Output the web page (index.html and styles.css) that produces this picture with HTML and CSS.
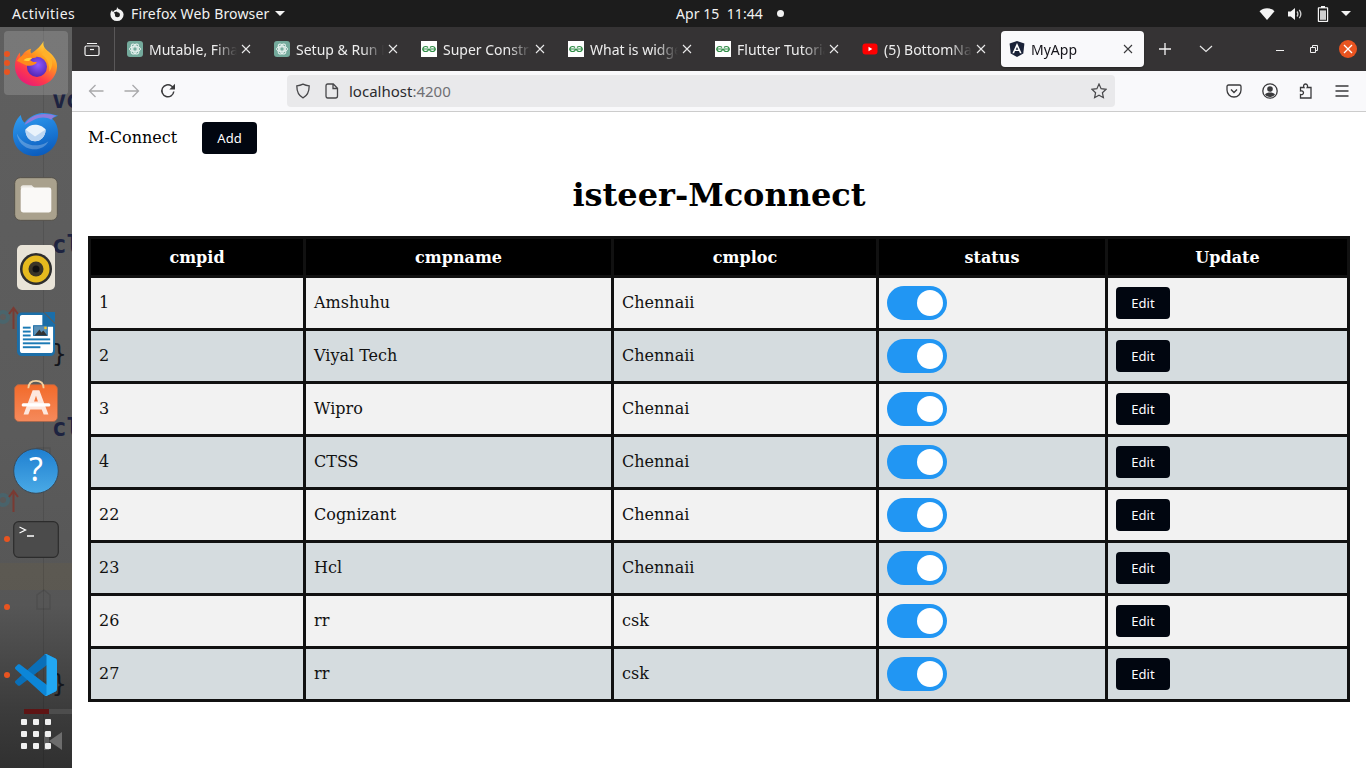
FILE: index.html
```html
<!DOCTYPE html>
<html lang="en">
<head>
<meta charset="utf-8">
<title>MyApp</title>
<link rel="stylesheet" href="styles.css">
</head>
<body>
<svg class="defs" width="0" height="0" aria-hidden="true">
  <defs>
    <symbol id="x" viewBox="0 0 10 10"><path fill="none" stroke="currentColor" stroke-width="1.100" d="M1 1l8 8M9 1l-8 8"/></symbol>
    <symbol id="gpt" viewBox="0 0 16 16"><rect width="16" height="16" rx="3" fill="#74aa9c"/><g fill="none" stroke="#e9f3f0" stroke-width=".9"><circle cx="8" cy="8" r="2.200"/><ellipse cx="8" cy="8" rx="5.500" ry="2.800"/><ellipse cx="8" cy="8" rx="5.500" ry="2.800" transform="rotate(60 8 8)"/><ellipse cx="8" cy="8" rx="5.500" ry="2.800" transform="rotate(120 8 8)"/></g></symbol>
    <symbol id="gfg" viewBox="0 0 16 16"><rect width="16" height="16" fill="#fff"/><g fill="none" stroke="#2f8d46" stroke-width="1.200"><path d="M7.800 8H1.700c.3-1.700 1.400-2.500 2.900-2.500 1 0 1.800.3 2.400 1M8.200 8h6.100c-.3-1.700-1.400-2.500-2.900-2.500-1 0-1.800.3-2.400 1M1.800 8.300c.3 1.400 1.400 2.200 2.800 2.200 1.400 0 2.600-.7 3-2.400M14.200 8.300c-.3 1.400-1.400 2.200-2.800 2.200-1.400 0-2.600-.7-3-2.400"/></g></symbol>
  </defs>
</svg>
<header class="topbar">
  <span class="activities">Activities</span>
  <div class="appmenu">
    <svg class="ff-mono" width="16" height="16" viewBox="0 0 16 16"><path fill="#f2f2f2" d="M8 0.8c.3 1.200 1 2 2.200 2.400 2.400.9 4.400 2.600 4.400 5.300A6.600 6.600 0 0 1 8 15.100 6.600 6.600 0 0 1 1.400 8.500c0-1.700.6-3.200 1.700-4.400 0 1 .4 1.700 1 2.200C4.600 4.700 6 4 7.400 3.800 7.900 2.800 8.100 1.800 8 .8z"/><circle cx="8.400" cy="8.700" r="2.500" fill="#1c1c1c"/><path fill="#1c1c1c" d="M5 6.200l3-.6.6 1.600-2.800.8z"/></svg>
    <span class="appname">Firefox Web Browser</span>
    <i class="caret"></i>
  </div>
  <div class="clock"><span>Apr 15&nbsp;&nbsp;11:44</span><i class="clock-dot"></i></div>
  <div class="status">
    <svg class="st-wifi" width="16" height="14" viewBox="0 0 16 14"><path fill="#f4f4f4" d="M8 13 .5 4.200C2.500 2.300 5.100 1.200 8 1.200s5.500 1.100 7.500 3z"/></svg>
    <svg class="st-vol" width="16" height="14" viewBox="0 0 16 14"><path fill="#f4f4f4" d="M1 4.500h2.800L8 1v12L3.800 9.500H1z"/><path fill="none" stroke="#d0d0d0" stroke-width="1.300" d="M10 4.500c1 1.400 1 3.600 0 5M12.300 2.800c1.800 2.500 1.800 6 0 8.400"/></svg>
    <svg class="st-bat" width="12" height="16" viewBox="0 0 12 16"><path fill="#f4f4f4" d="M4 0h4v1.200h2.200c.6 0 1 .4 1 1V15c0 .6-.4 1-1 1H1.800c-.6 0-1-.4-1-1V2.200c0-.6.4-1 1-1H4z"/><rect x="2" y="2.400" width="8" height="12.400" fill="#1c1c1c"/><rect x="3" y="4.400" width="6" height="9.400" fill="#cfcfcf"/></svg>
    <i class="caret"></i>
  </div>
</header>

<div class="desktop">
  <aside class="dock">
    <svg class="dock-bg" width="72" height="741" viewBox="0 0 72 741">
      <rect x="0" y="536" width="72" height="27" fill="#6b5f45" opacity=".25"/>
      <path fill="none" stroke="#000" stroke-opacity=".1" stroke-width="1" d="M43.500 0V741"/>
      <g fill="none" stroke="#000" stroke-opacity=".09" stroke-width="1.500">
        <path d="M37 38v14h13V38l-6-5zM37 178v14h13v-14l-6-5zM37 305v14h13v-14zM37 421v10l6 5 7-5v-10zM37 496v14h13v-14zM37 568v14h13v-14l-6-5zM37 641v14h13v-14l-6-5z"/>
      </g>
      <g fill="#1d2340" font-family="'DejaVu Sans Mono',monospace" font-weight="700" font-size="24">
        <text x="52" y="81">vo</text><text x="52" y="226">cl</text><text x="52" y="409">cl</text>
      </g>
      <g fill="#14161c" font-family="'DejaVu Sans Mono',monospace" font-size="24">
        <text x="52" y="335">}</text><text x="52" y="665">}</text>
      </g>
      <g fill="none" stroke="#3f6b78" stroke-width="4" opacity=".6"><circle cx="3" cy="290" r="5"/><circle cx="3" cy="473" r="5"/></g>
      <g fill="none" stroke="#7a3a32" stroke-width="2"><path d="M13.500 302v-21M9 287l4.500-6 4.500 6M13.500 485v-21M9 470l4.500-6 4.500 6"/></g>
      <rect x="24" y="682" width="25" height="5" fill="#5e1414"/><rect x="49" y="682" width="23" height="5" fill="#4d4d4d"/>
      <path fill="#6d6d6d" d="M62 705v18l-13-9z"/><rect x="44" y="705" width="5" height="18" fill="#5d5d5d"/>
    </svg>
    <i class="run-dot d1"></i><i class="run-dot d2"></i><i class="run-dot d3"></i>
    <i class="run-dot d4"></i><i class="run-dot d5"></i><i class="run-dot d6"></i>

    <div class="dock-item di-ff">
      <svg width="44" height="46" viewBox="0 0 46 48" preserveAspectRatio="none">
        <defs>
          <linearGradient id="fx1" x1=".8" y1="0" x2=".2" y2="1"><stop offset="0" stop-color="#ffe14a"/><stop offset=".35" stop-color="#ff9a1f"/><stop offset=".7" stop-color="#ff3a4b"/><stop offset="1" stop-color="#e3167f"/></linearGradient>
          <radialGradient id="fx2" cx=".55" cy=".4" r=".7"><stop offset="0" stop-color="#9059ff"/><stop offset="1" stop-color="#4a1fa8"/></radialGradient>
        </defs>
        <path fill="url(#fx1)" d="M31 1c-1 5 1 8 5 11 5 4 9 9 9 15 0 12-10 21-22 21S1 39 1 27c0-6 2-10 5-14l1 6c2-5 6-9 11-10-1 2-1 3 0 5 3-2 9-6 13-13z"/>
        <circle cx="24" cy="28" r="10.500" fill="url(#fx2)"/>
        <path fill="#ff8a1c" d="M3 22c3-5 8-8 13-7 3 .5 6 2 8 4-3-1-6 0-7 2 2 2 4 2 7 2-2 4-8 5-12 3-3-1-6-3-9-4z"/>
        <path fill="#ffd23a" d="M10 21c3-2 6-3 9-2-2 1-3 2-3 3-2 0-4 0-6-1z"/>
        <path fill="#ffb12a" d="M31 8c5 4 9 9 9 16 0 3-1 6-3 9 0-8-2-14-8-18 2-2 2-4 2-7z"/>
      </svg>
    </div>
    <div class="dock-item di-tb">
      <svg width="48" height="47" viewBox="0 0 50 48" preserveAspectRatio="none">
        <defs><linearGradient id="tb1" x1=".3" y1="0" x2=".6" y2="1"><stop offset="0" stop-color="#2f9bf0"/><stop offset="1" stop-color="#0a5bbd"/></linearGradient></defs>
        <path fill="url(#tb1)" d="M9 6c1 4 2 6 4 8 4-5 10-9 18-10 6 0 12 1 17 3-3 1-5 2-6 3 4 4 6 9 6 15 0 12-10 23-24 23S1 38 1 26c0-8 3-15 8-20z"/>
        <path fill="#8f7bdc" d="M13 16c4-7 12-11 21-11 5 0 9 1 12 2-2 1-4 2-5 4-5-3-12-3-18 0-4 2-7 4-10 5z"/>
        <path fill="#fff" fill-opacity=".25" d="M5 25c4 8 12 13 22 12 4 0 8-2 11-4-3 6-10 9-17 8C12 40 6 33 5 25z"/>
        <path fill="#eaf3fb" d="M14 21c2-3 6-5 10-5s9 2 11 5c0 7-5 12-11 12s-10-5-10-12z"/>
        <path fill="#bcd6f2" d="M14 21l10 7 11-7c0 7-5 12-11 12s-10-5-10-12z"/>
      </svg>
    </div>
    <div class="dock-item di-files">
      <svg width="44" height="44" viewBox="0 0 46 46">
        <rect x=".7" y=".7" width="44.600" height="44.600" rx="6" fill="#a9a18d" stroke="#55524a" stroke-width="1"/>
        <path fill="#ece9e3" d="M7 11c0-1.500 1-2.500 2.500-2.500h9L22 12H7z"/>
        <rect x="7" y="11" width="32" height="26" rx="2.500" fill="#faf9f7"/>
      </svg>
    </div>
    <div class="dock-item di-rb">
      <svg width="46" height="46" viewBox="0 0 46 46">
        <rect x="4" y="1" width="38" height="45" rx="5" fill="#e9e4d8"/>
        <circle cx="23" cy="25" r="16" fill="#2e2e2e"/><circle cx="23" cy="25" r="13.500" fill="#e6ba1e"/><circle cx="23" cy="25" r="7.500" fill="#3a3528"/><circle cx="23" cy="25" r="3.500" fill="#111"/>
      </svg>
    </div>
    <div class="dock-item di-lo">
      <svg width="39" height="45" viewBox="0 0 40 46" preserveAspectRatio="none">
        <path fill="#1b6ea8" d="M5 .5h22l12 12V40c0 3-2 5-5 5H5c-3 0-5-2-5-5V5.500C0 2.500 2 .5 5 .5z"/>
        <path fill="#fff" d="M5 3h21v12h11v24c0 2-1 3-3 3H6c-2 0-3-1-3-3V5c0-1 1-2 2-2z"/>
        <path fill="#1b6ea8" d="M28 0h11v11z"/>
        <g fill="#1b7ab5"><rect x="6" y="15" width="8" height="2"/><rect x="6" y="19" width="8" height="2"/><rect x="6" y="23" width="8" height="2"/><rect x="6" y="27" width="28" height="2"/><rect x="6" y="31" width="28" height="2"/><rect x="6" y="35" width="18" height="2"/></g>
        <rect x="17" y="14" width="14" height="10" fill="#5a8fb5" stroke="#1b6ea8"/>
        <path fill="#333" d="M18 24l5-6 2 3 2-2 4 5z"/><rect x="28" y="15" width="2.500" height="2.500" fill="#f5c431"/>
      </svg>
    </div>
    <div class="dock-item di-store">
      <svg width="44" height="43" viewBox="0 0 46 46" preserveAspectRatio="none">
        <defs><linearGradient id="sc" x1="0" y1="0" x2="0" y2="1"><stop offset="0" stop-color="#f26a2a"/><stop offset="1" stop-color="#f58a5c"/></linearGradient></defs>
        <rect x=".5" y="6" width="45" height="39.500" rx="5" fill="url(#sc)" stroke="#a9674a"/>
        <path fill="none" stroke="#f1d0a0" stroke-width="1.800" d="M15 10c0-6 4-8 8-8s8 2 8 8"/>
        <path fill="#fde7de" d="M19.500 12h7L36 38h-5l-2-5.500H17L15 38h-5zM21 24h4l-2-6z"/>
        <rect x="8" y="26" width="30" height="3.500" rx="1.700" fill="#fff"/>
      </svg>
    </div>
    <div class="dock-item di-help">
      <svg width="46" height="46" viewBox="0 0 46 46">
        <defs><linearGradient id="hp" x1="0" y1="0" x2="0" y2="1"><stop offset="0" stop-color="#1f7fd0"/><stop offset="1" stop-color="#4aaae6"/></linearGradient></defs>
        <circle cx="23" cy="23" r="22.300" fill="url(#hp)" stroke="#3a4a58"/>
        <text class="help-q" x="23" y="33" text-anchor="middle">?</text>
      </svg>
    </div>
    <div class="dock-item di-term">
      <svg width="46" height="37" viewBox="0 0 46 37">
        <rect x=".7" y=".7" width="44.600" height="35.600" rx="5" fill="#4b4b4b" stroke="#2c2c2c" stroke-width="1.200"/>
        <path fill="none" stroke="#fff" stroke-width="1.300" d="M6.500 6l6 3-6 3"/><path stroke="#fff" stroke-width="1.500" d="M14 15h7"/>
      </svg>
    </div>
    <div class="dock-item di-vs">
      <svg width="42" height="42" viewBox="0 0 100 100">
        <path fill="#0a6fb8" d="M96.461 10.796L75.857.877C73.472-.271 70.622.213 68.750 2.085L1.299 63.583C-.515 65.238-.513 68.096 1.304 69.748L6.813 74.757C8.298 76.107 10.535 76.206 12.134 74.994L93.359 13.375C96.084 11.308 100 13.251 100 16.672V16.432C100 14.030 98.624 11.841 96.461 10.796Z"/>
        <path fill="#0c86d8" d="M96.461 89.204L75.857 99.123C73.472 100.271 70.622 99.787 68.750 97.915L1.299 36.417C-.515 34.762-.513 31.904 1.304 30.252L6.813 25.243C8.298 23.893 10.535 23.794 12.134 25.006L93.359 86.625C96.084 88.692 100 86.749 100 83.328V83.568C100 85.970 98.624 88.159 96.461 89.204Z"/>
        <path fill="#22a7f2" d="M75.858 99.126C73.472 100.274 70.622 99.788 68.750 97.916C71.056 100.222 75 98.588 75 95.327V4.672C75 1.411 71.056-.222 68.750 2.084C70.622.212 73.472-.275 75.858.873L96.458 10.780C98.622 11.821 100 14.010 100 16.413V83.587C100 85.990 98.622 88.179 96.458 89.220Z"/>
      </svg>
    </div>
    <div class="appgrid">
      <i></i><i></i><i></i><i></i><i></i><i></i><i></i><i></i><i></i>
    </div>
  </aside>

  <div class="browser">
    <div class="tabbar">
      <button class="tab-view" aria-label="Firefox View">
        <svg width="16" height="16" viewBox="0 0 16 16"><path fill="none" stroke="#f4f4f4" stroke-width="1.200" d="M1 6.500C1 5.500 1.500 5 2.500 5h11c1 0 1.500.5 1.500 1.500V13c0 1-.5 1.500-1.500 1.500h-11C1.500 14.500 1 14 1 13zM3 2.500h10"/><path stroke="#f4f4f4" stroke-width="1.200" d="M6 8.500h4"/></svg>
      </button>
      <div class="tabs">
        <div class="tab"><svg class="fav" width="16" height="16"><use href="#gpt"/></svg><span class="tab-title">Mutable, Final</span><svg class="tab-x" width="10" height="10"><use href="#x"/></svg></div>
        <div class="tab"><svg class="fav" width="16" height="16"><use href="#gpt"/></svg><span class="tab-title">Setup &amp; Run Dart</span><svg class="tab-x" width="10" height="10"><use href="#x"/></svg></div>
        <div class="tab"><svg class="fav" width="16" height="16"><use href="#gfg"/></svg><span class="tab-title">Super Constructor</span><svg class="tab-x" width="10" height="10"><use href="#x"/></svg></div>
        <div class="tab"><svg class="fav" width="16" height="16"><use href="#gfg"/></svg><span class="tab-title">What is widget</span><svg class="tab-x" width="10" height="10"><use href="#x"/></svg></div>
        <div class="tab"><svg class="fav" width="16" height="16"><use href="#gfg"/></svg><span class="tab-title">Flutter Tutorial</span><svg class="tab-x" width="10" height="10"><use href="#x"/></svg></div>
        <div class="tab">
          <svg class="fav" width="16" height="16" viewBox="0 0 16 16"><rect x="0.500" y="2.500" width="15" height="11" rx="3" fill="#f00"/><path fill="#fff" d="M6.500 5.800v4.400L10.300 8z"/></svg>
          <span class="tab-title">(5) BottomNavigation</span><svg class="tab-x" width="10" height="10"><use href="#x"/></svg>
        </div>
        <div class="tab current">
          <svg class="fav" width="16" height="16" viewBox="0 0 16 16"><path fill="#1a2238" d="M8 0 .6 2.600l1.100 9.800L8 16l6.300-3.600 1.100-9.800z"/><path fill="#fff" d="M8 2 3.400 12.300h1.700l.9-2.300h4l.9 2.300h1.700zM8 5.900l1.300 2.800H6.700z"/></svg>
          <span class="tab-title">MyApp</span><svg class="tab-x" width="10" height="10"><use href="#x"/></svg>
        </div>
      </div>
      <span class="tab-new">
        <svg width="14" height="14" viewBox="0 0 14 14"><path stroke="#f4f4f4" stroke-width="1.300" d="M7 1v12M1 7h12"/></svg>
      </span>
      <span class="tab-list">
        <svg width="14" height="8" viewBox="0 0 14 8"><path fill="none" stroke="#e8e8e8" stroke-width="1.200" d="M1 1l6 5.500L13 1"/></svg>
      </span>
      <div class="winctl">
        <span class="wc-min"></span>
        <svg class="wc-restore" width="8" height="8" viewBox="0 0 8 8"><path fill="none" stroke="#f0f0f0" d="M.5 2.500h5v5h-5zM2.500 2.500v-2h5v5h-2"/></svg>
        <span class="wc-close"><svg width="10" height="10" viewBox="0 0 10 10"><path stroke="#fff" stroke-width="1.300" d="M1 1l8 8M9 1l-8 8"/></svg></span>
      </div>
    </div>

    <div class="toolbar">
      <svg class="tb-back" width="16" height="16" viewBox="0 0 16 16"><path fill="none" stroke="#a9a9ab" stroke-width="1.300" d="M15.500 8H1.500M7.500 2l-6 6 6 6"/></svg>
      <svg class="tb-fwd" width="16" height="16" viewBox="0 0 16 16"><path fill="none" stroke="#a9a9ab" stroke-width="1.300" d="M.5 8h14M8.500 2l6 6-6 6"/></svg>
      <svg class="tb-reload" width="16" height="16" viewBox="0 0 16 16"><path fill="none" stroke="#3a3a3c" stroke-width="1.500" d="M13.800 8.500A6 6 0 1 1 11.500 3L14 5"/><path fill="#3a3a3c" d="M15 .8V6.500H9.300z"/></svg>
      <div class="urlbar">
        <svg class="u-shield" width="16" height="16" viewBox="0 0 16 16"><path fill="none" stroke="#47474a" stroke-width="1.300" d="M8 1.200c2 1 4 1.500 6.200 1.600 0 6-1.800 10-6.200 12-4.400-2-6.200-6-6.200-12C4 2.700 6 2.200 8 1.200z"/></svg>
        <svg class="u-page" width="14" height="16" viewBox="0 0 14 16"><path fill="none" stroke="#47474a" stroke-width="1.300" d="M2.700 1h5.600L12.500 5.200V13c0 1.300-.7 2-2 2H2.700c-1 0-1.700-.7-1.700-2V3c0-1.300.7-2 1.700-2zM8 1v4.500h4.500"/></svg>
        <span class="u-text">localhost<span class="u-port">:4200</span></span>
        <svg class="u-star" width="16" height="16" viewBox="0 0 16 16"><path fill="none" stroke="#47474a" stroke-width="1.200" d="M8 1l2.100 4.700 5 .6-3.700 3.400 1 5L8 12.200l-4.400 2.500 1-5L.9 6.300l5-.6z"/></svg>
      </div>
      <div class="tb-right">
        <svg width="16" height="16" viewBox="0 0 16 16"><path fill="none" stroke="#3a3a3c" stroke-width="1.300" d="M2.500 2h11C14.400 2 15 2.600 15 3.500V7c0 3.800-3 7-7 7s-7-3.200-7-7V3.500C1 2.600 1.600 2 2.500 2z"/><path fill="none" stroke="#3a3a3c" stroke-width="1.400" d="M5 6.500l3 3 3-3"/></svg>
        <svg width="16" height="16" viewBox="0 0 16 16"><circle cx="8" cy="8" r="7.200" fill="none" stroke="#3a3a3c" stroke-width="1.300"/><circle cx="8" cy="6" r="2.800" fill="#3a3a3c"/><path fill="#3a3a3c" d="M3 11.500C4 10 6 9.500 8 9.500s4 .5 5 2c-1 1.500-3 2.500-5 2.500s-4-1-5-2.500z"/></svg>
        <svg width="16" height="16" viewBox="0 0 16 16"><path fill="none" stroke="#3a3a3c" stroke-width="1.300" d="M2.500 15V11.500c1.500.6 3-.2 3-1.700S4 7.500 2.500 8V4.500H6c-.8-1.200-.5-3.500 1.500-3.500S10 3.300 9.200 4.500H13V15z"/></svg>
        <svg width="16" height="16" viewBox="0 0 16 16"><path stroke="#3a3a3c" stroke-width="1.300" d="M1.500 3h13M1.500 8h13M1.500 13h13"/></svg>
      </div>
    </div>

    <main class="page">
      <nav class="navrow">
        <span class="brand">M-Connect</span>
        <button class="btn add">Add</button>
      </nav>
      <h1 class="title">isteer-Mconnect</h1>
      <table class="grid">
        <colgroup><col class="c1"><col class="c2"><col class="c3"><col class="c4"><col class="c5"></colgroup>
        <thead>
          <tr><th>cmpid</th><th>cmpname</th><th>cmploc</th><th>status</th><th>Update</th></tr>
        </thead>
        <tbody>
          <tr><td>1</td><td>Amshuhu</td><td>Chennaii</td><td><span class="switch"><i></i></span></td><td><button class="btn edit">Edit</button></td></tr>
          <tr><td>2</td><td>Viyal Tech</td><td>Chennaii</td><td><span class="switch"><i></i></span></td><td><button class="btn edit">Edit</button></td></tr>
          <tr><td>3</td><td>Wipro</td><td>Chennai</td><td><span class="switch"><i></i></span></td><td><button class="btn edit">Edit</button></td></tr>
          <tr><td>4</td><td>CTSS</td><td>Chennai</td><td><span class="switch"><i></i></span></td><td><button class="btn edit">Edit</button></td></tr>
          <tr><td>22</td><td>Cognizant</td><td>Chennai</td><td><span class="switch"><i></i></span></td><td><button class="btn edit">Edit</button></td></tr>
          <tr><td>23</td><td>Hcl</td><td>Chennaii</td><td><span class="switch"><i></i></span></td><td><button class="btn edit">Edit</button></td></tr>
          <tr><td>26</td><td>rr</td><td>csk</td><td><span class="switch"><i></i></span></td><td><button class="btn edit">Edit</button></td></tr>
          <tr><td>27</td><td>rr</td><td>csk</td><td><span class="switch"><i></i></span></td><td><button class="btn edit">Edit</button></td></tr>
        </tbody>
      </table>
    </main>
  </div>
</div>
</body>
</html>
```
FILE: styles.css
```css
* { box-sizing: border-box; }
html, body { margin: 0; height: 100%; }
body {
  width: 1366px; height: 768px; overflow: hidden;
  display: flex; flex-direction: column;
  font-family: "Noto Sans", "Open Sans", sans-serif;
  background: #fff;
}
i { display: block; }
.defs { position: absolute; }

/* top bar */
.topbar {
  height: 27px; flex: none; background: #1c1c1c; color: #f2f2f2;
  display: flex; align-items: center; position: relative;
  font-size: 14px; padding-left: 12px;
}
.activities { width: 97px; letter-spacing: .5px; }
.appmenu { display: flex; align-items: center; gap: 6px; }
.appname { letter-spacing: .16px; }
.caret { width: 0; height: 0; border-left: 5px solid transparent; border-right: 5px solid transparent; border-top: 5px solid #f2f2f2; }
.clock {
  position: absolute; left: 676px; top: 0; height: 27px;
  display: flex; align-items: center; gap: 14px;
}
.clock span { letter-spacing: .06px; }
.clock-dot { width: 7px; height: 7px; border-radius: 50%; background: #f2f2f2; }
.status { position: absolute; left: 1259px; top: 0; height: 27px; display: flex; align-items: center; }
.st-vol { margin-left: 12px; }
.st-bat { margin-left: 14px; }
.status .caret { margin-left: 12px; }

.desktop { flex: 1; display: flex; min-height: 0; }

/* dock */
.dock {
  width: 72px; flex: none; position: relative; overflow: hidden;
  background: linear-gradient(#5f5f5f 0, #5b5b5b 55%, #565656 78%, #3c3c3c 92%, #303030 100%);
}
.dock-bg { position: absolute; left: 0; top: 0; }
.dock-item { position: absolute; left: 4px; width: 64px; height: 64px; display: flex; align-items: center; justify-content: center; }
.di-ff { top: 4px; background: rgba(255,255,255,.16); border-radius: 4px; }
.di-ff svg { margin-top: -1px; }
.di-tb { top: 73px; }
.di-files { top: 140px; }
.di-rb { top: 208px; }
.di-lo { top: 275px; }
.di-store { top: 341px; }
.di-help { top: 412px; }
.di-term { top: 480px; }
.di-vs { top: 616px; }
.help-q { fill: #fff; font: 400 32px "Noto Sans", sans-serif; }
.run-dot { position: absolute; left: 4px; width: 6px; height: 6px; border-radius: 50%; background: #e95420; z-index: 2; }
.d1 { top: 24px; } .d2 { top: 33px; } .d3 { top: 42px; }
.d4 { top: 509px; } .d5 { top: 577px; } .d6 { top: 645px; }
.appgrid {
  position: absolute; left: 21px; top: 692px;
  display: grid; grid-template-columns: repeat(3, 6px); grid-auto-rows: 6px; gap: 6px;
}
.appgrid i { background: #f0f0f0; border-radius: 1px; }

/* browser */
.browser { flex: 1; min-width: 0; display: flex; flex-direction: column; }
.tabbar { height: 44px; flex: none; background: #353334; display: flex; align-items: center; color: #f4f4f4; }
.tab-view {
  width: 43px; height: 44px; padding: 0 2px 0 0; border: 0; border-right: 1px solid #5a5859; background: none;
  display: flex; align-items: center; justify-content: center;
}
.tabs { display: flex; gap: 4px; padding-left: 4px; width: 1029px; flex: none; }
.tab {
  width: 143px; height: 36px; padding: 0 8px; border-radius: 4px; flex: none;
  display: flex; align-items: center; font-size: 14px; color: #ededed;
}
.fav { flex: none; margin-right: 6px; }
.tab-title {
  width: 88px; flex: none; white-space: nowrap; overflow: hidden;
  -webkit-mask-image: linear-gradient(90deg, #000 75%, transparent 100%);
  mask-image: linear-gradient(90deg, #000 75%, transparent 100%);
}
.tab-x { margin-left: 4px; flex: none; color: #eaeaea; }
.tab.current { background: #f9f9fb; color: #15141a; box-shadow: 0 1px 2px rgba(0,0,0,.3); }
.tab.current .tab-x { color: #3a3a3c; }
.tab-new { margin-left: 14px; width: 14px; height: 14px; display: flex; }
.tab-list { margin-left: 27px; width: 14px; height: 8px; display: flex; }
.winctl { display: flex; align-items: center; margin-left: 63px; }
.wc-min { width: 8px; height: 1.5px; background: #f0f0f0; margin-top: 3px; }
.wc-restore { margin-left: 26px; }
.wc-close { margin-left: 21px; width: 18px; height: 18px; border-radius: 50%; background: #e95420; display: flex; align-items: center; justify-content: center; }

.toolbar { height: 41px; flex: none; background: #f9f9fb; border-bottom: 1px solid #ccc; display: flex; align-items: center; padding-bottom: 1px; }
.tb-back { margin-left: 16px; }
.tb-fwd { margin-left: 20px; }
.tb-reload { margin-left: 20px; }
.urlbar {
  margin-left: 111px; width: 828px; height: 32px; border-radius: 4px; background: #e9e9eb;
  display: flex; align-items: center; padding: 0 8px; font-size: 15px; color: #2b2b2f;
}
.u-page { margin-left: 14px; }
.u-text { margin-left: 10px; flex: 1; }
.u-port { color: #6f6f73; }
.tb-right { margin-left: 111px; display: flex; gap: 20px; }

/* page */
.page { flex: 1; padding: 10px 16px 0; background: #fff; min-height: 0; font-family: "DejaVu Serif", serif; color: #000; }
.navrow { display: flex; align-items: center; height: 32px; }
.brand { font-size: 16px; width: 114px; padding-bottom: 2px; }
.btn { border: 0; border-radius: 4px; background: #010610; color: #fff; font-family: "Noto Sans", "Open Sans", sans-serif; font-size: 13px; padding: 0; }
.btn.add { width: 55px; height: 32px; }
.btn.edit { width: 54px; height: 32px; display: block; }
.title { margin: 22px 0 21px; font-size: 32px; line-height: 39px; font-weight: 700; text-align: center; }
.grid {
  width: 1262px; table-layout: fixed; border-collapse: separate; border-spacing: 0;
  border-top: 3px solid #111; border-left: 3px solid #111; font-size: 16px;
}
.c1 { width: 215px; } .c2 { width: 308px; } .c3 { width: 265px; } .c4 { width: 229px; } .c5 { width: 242px; }
.grid th, .grid td { border-right: 3px solid #111; border-bottom: 3px solid #111; padding: 0 8px; text-align: left; }
.grid th { height: 39px; background: #000; color: #fff; text-align: center; font-size: 16px; font-weight: 700; }
.grid td { height: 53px; color: #111; }
.grid td:nth-child(-n+3) { padding-bottom: 2px; }
.grid tbody tr:nth-child(odd) td { background: #f2f2f2; }
.grid tbody tr:nth-child(even) td { background: #d5dcdf; }
.switch { display: block; position: relative; width: 60px; height: 34px; border-radius: 17px; background: #2196f3; }
.switch i { position: absolute; right: 4px; top: 4px; width: 26px; height: 26px; border-radius: 50%; background: #fff; }
```
